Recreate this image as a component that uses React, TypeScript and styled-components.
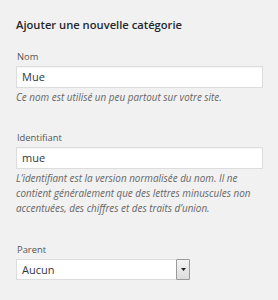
import React from "react";
import styled, { createGlobalStyle } from "styled-components";

const GlobalStyle = createGlobalStyle`
  html, body {
    margin: 0;
    padding: 0;
    background: #f1f1f1;
  }
  body {
    font-family: "Open Sans", "Liberation Sans", sans-serif;
    color: #444;
  }
`;

const Panel = styled.div`
  width: 278px;
  height: 300px;
  box-sizing: border-box;
  padding: 17px 15px 0 16px;
  background: #f1f1f1;
`;

const Title = styled.h2`
  margin: 0 0 17px 0;
  font-size: 11.2px;
  font-weight: 600;
  color: #23282d;
  line-height: 16px;
`;

const Field = styled.div<{ $gap?: number }>`
  margin-bottom: ${(p) => p.$gap ?? 0}px;
`;

const Label = styled.label`
  display: block;
  padding-left: 1px;
  font-size: 9.4px;
  line-height: 14px;
  color: #555;
  margin-bottom: 2px;
`;

const TextInput = styled.div`
  box-sizing: border-box;
  width: 247px;
  height: 22px;
  padding: 0 5px;
  background: #fff;
  border: 1px solid #ddd;
  box-shadow: inset 0 1px 2px rgba(0, 0, 0, 0.05);
  font-size: 11px;
  line-height: 20px;
  color: #32373c;
`;

const Help = styled.p`
  margin: 2px 0 0 0;
  font-size: 9.9px;
  font-style: italic;
  line-height: 15px;
  color: #666;
`;

const Select = styled.div`
  box-sizing: border-box;
  display: flex;
  width: 174px;
  height: 21px;
  background: #fff;
  border: 1px solid #ddd;
`;

const SelectValue = styled.div`
  flex: 1;
  padding: 0 5px;
  font-size: 11px;
  line-height: 19px;
  color: #32373c;
`;

const Arrow = styled.div`
  box-sizing: border-box;
  width: 14px;
  margin: -1px -1px -1px 0;
  border: 1px solid #9a9a9a;
  border-radius: 1px;
  background: linear-gradient(#f4f4f4, #dcdcdc);
  display: flex;
  align-items: center;
  justify-content: center;
`;

export default function App() {
  return (
    <>
      <GlobalStyle />
      <Panel>
        <Title>Ajouter une nouvelle catégorie</Title>
        <Field $gap={26}>
          <Label>Nom</Label>
          <TextInput>Mue</TextInput>
          <Help>Ce nom est utilisé un peu partout sur votre site.</Help>
        </Field>
        <Field $gap={27}>
          <Label>Identifiant</Label>
          <TextInput>mue</TextInput>
          <Help>
            L’identifiant est la version normalisée du nom. Il ne contient
            généralement que des lettres minuscules non accentuées, des
            chiffres et des traits d’union.
          </Help>
        </Field>
        <Field>
          <Label>Parent</Label>
          <Select>
            <SelectValue>Aucun</SelectValue>
            <Arrow>
              <svg width="5" height="3" viewBox="0 0 5 3">
                <path d="M0 0h5L2.5 3z" fill="#222" />
              </svg>
            </Arrow>
          </Select>
        </Field>
      </Panel>
    </>
  );
}
